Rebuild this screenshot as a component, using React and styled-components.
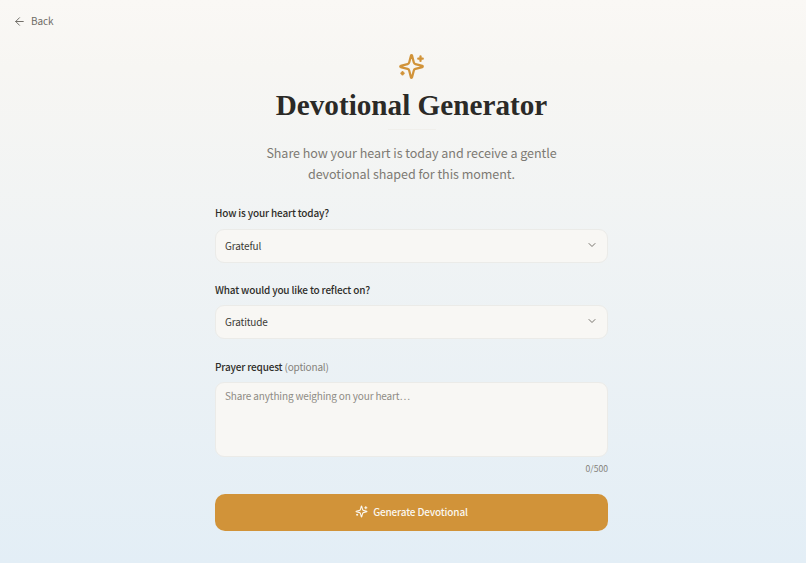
import React from "react";
import styled, { createGlobalStyle } from "styled-components";
import { ArrowLeft, ChevronDown } from "lucide-react";

const Global = createGlobalStyle`
  html, body { margin: 0; padding: 0; }
  body { font-family: "Noto Sans CJK SC", "Noto Sans", sans-serif; }
  * { box-sizing: border-box; }
`;

const Page = styled.div`
  width: 806px;
  height: 563px;
  overflow: hidden;
  background: linear-gradient(180deg, #faf8f5 0%, #f7f6f3 12%, #e3eef6 100%);
  color: #2b2a27;
`;

const TopBar = styled.div`
  display: flex;
  align-items: center;
  height: 42px;
  padding: 0 13px;
`;

const BackLink = styled.a`
  display: flex;
  align-items: center;
  gap: 5px;
  font-size: 10px;
  letter-spacing: -0.1px;
  line-height: 16px;
  color: #6f6c66;
`;

const Main = styled.main`
  width: 393px;
  margin-left: 215px;
  display: flex;
  flex-direction: column;
`;

const Header = styled.header`
  display: flex;
  flex-direction: column;
  align-items: center;
  padding-top: 11px;
  margin-bottom: 21px;
`;

const Title = styled.h1`
  margin: 5px 0 0;
  font-family: "Liberation Serif", serif;
  font-size: 29.2px;
  line-height: 40px;
  font-weight: 700;
  color: #2b2a27;
  white-space: nowrap;
`;

const Rule = styled.div`
  width: 48px;
  height: 1px;
  margin: 4px 0 12px;
  background: #f0efeb;
`;

const Subtitle = styled.p`
  margin: 0;
  font-size: 12.55px;
  letter-spacing: -0.05px;
  line-height: 21px;
  text-align: center;
  color: #7d7a73;
  white-space: nowrap;
`;

const Field = styled.div`
  display: flex;
  flex-direction: column;
  margin-bottom: ${(p) => p.$gap}px;
`;

const Label = styled.label`
  font-size: 10px;
  letter-spacing: -0.17px;
  line-height: 16px;
  font-weight: 500;
  color: #2f2e2a;
  margin-bottom: ${(p) => p.$below}px;
`;

const Optional = styled.span`
  font-weight: 400;
  color: #85827b;
`;

const Select = styled.div`
  display: flex;
  align-items: center;
  justify-content: space-between;
  height: 34px;
  padding: 0 9px 2px 9px;
  font-size: 10px;
  letter-spacing: -0.15px;
  color: #3b3a36;
  background: #f8f7f4;
  border: 1px solid #ebebe8;
  border-radius: 9px;
`;

const TextArea = styled.div`
  height: 75px;
  padding: 5px 9px;
  font-size: 10px;
  letter-spacing: -0.15px;
  line-height: 16px;
  color: #8e8b84;
  background: #f8f7f4;
  border: 1px solid #ebebe8;
  border-radius: 9px;
`;

const Counter = styled.div`
  margin-top: 4px;
  font-size: 8.6px;
  line-height: 14px;
  text-align: right;
  color: #85827b;
`;

const Button = styled.button`
  display: flex;
  align-items: center;
  justify-content: center;
  gap: 5px;
  width: 100%;
  height: 37px;
  padding: 0 0 2px;
  border: none;
  border-radius: 10px;
  background: #d19339;
  color: #fbf7ef;
  font-family: inherit;
  font-size: 10px;
  letter-spacing: -0.15px;
  font-weight: 500;
`;

const SparkleIcon = ({ size, color, width = 2 }) => (
  <svg
    width={size}
    height={size}
    viewBox="0 0 24 24"
    fill="none"
    stroke={color}
    strokeWidth={width}
    strokeLinecap="round"
    strokeLinejoin="round"
  >
    <path d="M9.937 15.5A2 2 0 0 0 8.5 14.063l-6.135-1.582a.5.5 0 0 1 0-.962L8.5 9.936A2 2 0 0 0 9.937 8.5l1.582-6.135a.5.5 0 0 1 .963 0L14.063 8.5A2 2 0 0 0 15.5 9.937l6.135 1.581a.5.5 0 0 1 0 .964L15.5 14.063a2 2 0 0 0-1.437 1.437l-1.582 6.135a.5.5 0 0 1-.963 0z" />
    <path d="M20 3v4" />
    <path d="M22 5h-4" />
    <path d="M4 17v2" />
    <path d="M5 18H3" />
  </svg>
);

export default function App() {
  return (
    <Page>
      <Global />
      <TopBar>
        <BackLink>
          <ArrowLeft size={13} strokeWidth={1.8} />
          Back
        </BackLink>
      </TopBar>
      <Main>
        <Header>
          <SparkleIcon size={27} color="#d19339" />
          <Title>Devotional Generator</Title>
          <Rule />
          <Subtitle>
            Share how your heart is today and receive a gentle
            <br />
            devotional shaped for this moment.
          </Subtitle>
        </Header>
        <Field $gap={19}>
          <Label $below={8}>How is your heart today?</Label>
          <Select>
            Grateful
            <ChevronDown size={12} color="#77746d" />
          </Select>
        </Field>
        <Field $gap={20}>
          <Label $below={7}>What would you like to reflect on?</Label>
          <Select>
            Gratitude
            <ChevronDown size={12} color="#77746d" />
          </Select>
        </Field>
        <Field $gap={19}>
          <Label $below={7}>
            Prayer request <Optional>(optional)</Optional>
          </Label>
          <TextArea>Share anything weighing on your heart…</TextArea>
          <Counter>0/500</Counter>
        </Field>
        <Button>
          <SparkleIcon size={13} color="#fbf7ef" />
          Generate Devotional
        </Button>
      </Main>
    </Page>
  );
}
